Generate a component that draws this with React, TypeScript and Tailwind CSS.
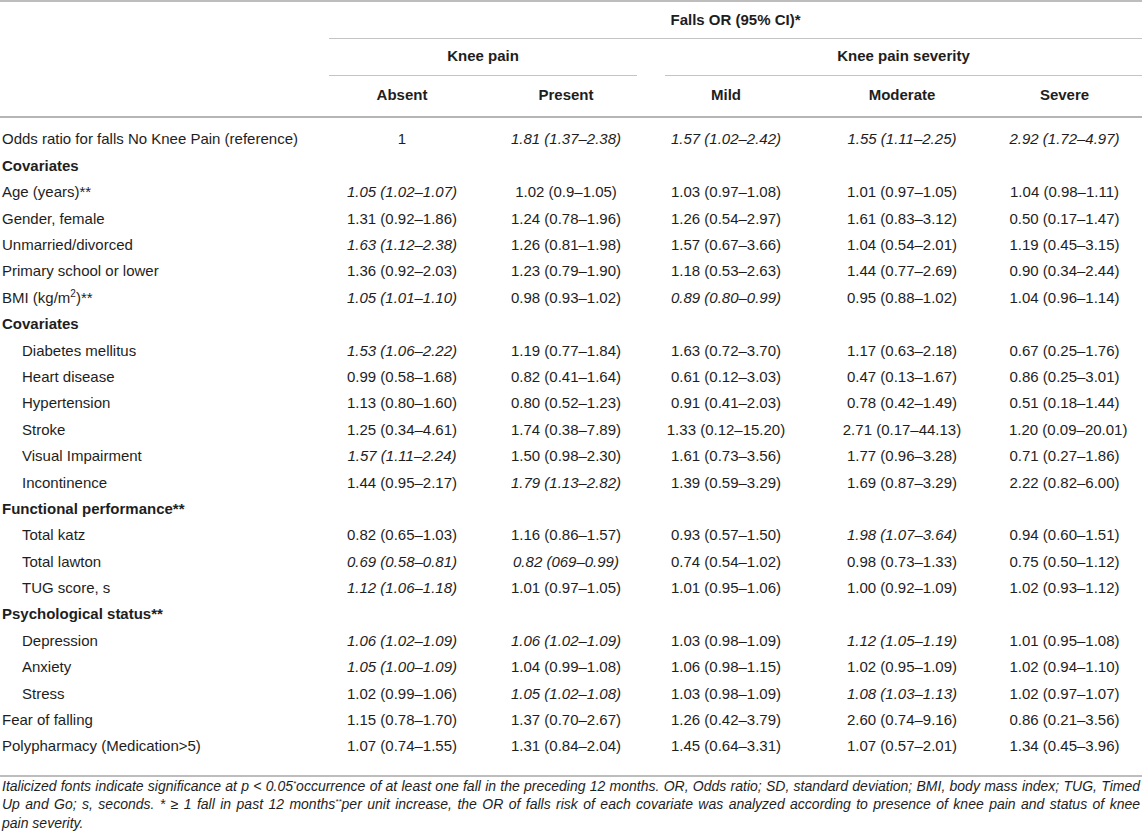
type Row = {
  label: string
  indent?: boolean
  section?: boolean
  cells?: string[]
}

// "i:" prefix marks an italicized (significant) value
const rows: Row[] = [
  { label: "Odds ratio for falls No Knee Pain (reference)", cells: ["1", "i:1.81 (1.37–2.38)", "i:1.57 (1.02–2.42)", "i:1.55 (1.11–2.25)", "i:2.92 (1.72–4.97)"] },
  { label: "Covariates", section: true },
  { label: "Age (years)**", cells: ["i:1.05 (1.02–1.07)", "1.02 (0.9–1.05)", "1.03 (0.97–1.08)", "1.01 (0.97–1.05)", "1.04 (0.98–1.11)"] },
  { label: "Gender, female", cells: ["1.31 (0.92–1.86)", "1.24 (0.78–1.96)", "1.26 (0.54–2.97)", "1.61 (0.83–3.12)", "0.50 (0.17–1.47)"] },
  { label: "Unmarried/divorced", cells: ["i:1.63 (1.12–2.38)", "1.26 (0.81–1.98)", "1.57 (0.67–3.66)", "1.04 (0.54–2.01)", "1.19 (0.45–3.15)"] },
  { label: "Primary school or lower", cells: ["1.36 (0.92–2.03)", "1.23 (0.79–1.90)", "1.18 (0.53–2.63)", "1.44 (0.77–2.69)", "0.90 (0.34–2.44)"] },
  { label: "BMI", cells: ["i:1.05 (1.01–1.10)", "0.98 (0.93–1.02)", "i:0.89 (0.80–0.99)", "0.95 (0.88–1.02)", "1.04 (0.96–1.14)"] },
  { label: "Covariates", section: true },
  { label: "Diabetes mellitus", indent: true, cells: ["i:1.53 (1.06–2.22)", "1.19 (0.77–1.84)", "1.63 (0.72–3.70)", "1.17 (0.63–2.18)", "0.67 (0.25–1.76)"] },
  { label: "Heart disease", indent: true, cells: ["0.99 (0.58–1.68)", "0.82 (0.41–1.64)", "0.61 (0.12–3.03)", "0.47 (0.13–1.67)", "0.86 (0.25–3.01)"] },
  { label: "Hypertension", indent: true, cells: ["1.13 (0.80–1.60)", "0.80 (0.52–1.23)", "0.91 (0.41–2.03)", "0.78 (0.42–1.49)", "0.51 (0.18–1.44)"] },
  { label: "Stroke", indent: true, cells: ["1.25 (0.34–4.61)", "1.74 (0.38–7.89)", "1.33 (0.12–15.20)", "2.71 (0.17–44.13)", "1.20 (0.09–20.01)"] },
  { label: "Visual Impairment", indent: true, cells: ["i:1.57 (1.11–2.24)", "1.50 (0.98–2.30)", "1.61 (0.73–3.56)", "1.77 (0.96–3.28)", "0.71 (0.27–1.86)"] },
  { label: "Incontinence", indent: true, cells: ["1.44 (0.95–2.17)", "i:1.79 (1.13–2.82)", "1.39 (0.59–3.29)", "1.69 (0.87–3.29)", "2.22 (0.82–6.00)"] },
  { label: "Functional performance**", section: true },
  { label: "Total katz", indent: true, cells: ["0.82 (0.65–1.03)", "1.16 (0.86–1.57)", "0.93 (0.57–1.50)", "i:1.98 (1.07–3.64)", "0.94 (0.60–1.51)"] },
  { label: "Total lawton", indent: true, cells: ["i:0.69 (0.58–0.81)", "i:0.82 (069–0.99)", "0.74 (0.54–1.02)", "0.98 (0.73–1.33)", "0.75 (0.50–1.12)"] },
  { label: "TUG score, s", indent: true, cells: ["i:1.12 (1.06–1.18)", "1.01 (0.97–1.05)", "1.01 (0.95–1.06)", "1.00 (0.92–1.09)", "1.02 (0.93–1.12)"] },
  { label: "Psychological status**", section: true },
  { label: "Depression", indent: true, cells: ["i:1.06 (1.02–1.09)", "i:1.06 (1.02–1.09)", "1.03 (0.98–1.09)", "i:1.12 (1.05–1.19)", "1.01 (0.95–1.08)"] },
  { label: "Anxiety", indent: true, cells: ["i:1.05 (1.00–1.09)", "1.04 (0.99–1.08)", "1.06 (0.98–1.15)", "1.02 (0.95–1.09)", "1.02 (0.94–1.10)"] },
  { label: "Stress", indent: true, cells: ["1.02 (0.99–1.06)", "i:1.05 (1.02–1.08)", "1.03 (0.98–1.09)", "i:1.08 (1.03–1.13)", "1.02 (0.97–1.07)"] },
  { label: "Fear of falling", cells: ["1.15 (0.78–1.70)", "1.37 (0.70–2.67)", "1.26 (0.42–3.79)", "2.60 (0.74–9.16)", "0.86 (0.21–3.56)"] },
  { label: "Polypharmacy (Medication>5)", cells: ["1.07 (0.74–1.55)", "1.31 (0.84–2.04)", "1.45 (0.64–3.31)", "1.07 (0.57–2.01)", "1.34 (0.45–3.96)"] },
]

const Label = ({ row }: { row: Row }) => {
  if (row.label === "BMI") {
    return (
      <>
        BMI (kg/m<span className="relative -top-[6px] text-[10px] leading-none">2</span>)**
      </>
    )
  }
  return <>{row.label}</>
}

export default function App() {
  return (
    <div className="w-[1142px] bg-white text-[#1e1e1e] font-['Liberation_Sans',Arial,sans-serif] text-[15px]">
      <table className="w-full table-fixed border-collapse">
        <colgroup>
          <col className="w-[329px]" />
          <col className="w-[146px]" />
          <col className="w-[182px]" />
          <col className="w-[138px]" />
          <col className="w-[214px]" />
          <col className="w-[133px]" />
        </colgroup>
        <thead className="font-bold">
          <tr className="border-t-[2px] border-[#bdbdbd]">
            <th />
            <th colSpan={5} className="h-[37px] p-0 text-center align-middle border-b border-[#c4c4c4]">
              Falls OR (95% CI)*
            </th>
          </tr>
          <tr>
            <th />
            <th colSpan={2} className="p-0 align-bottom">
              <div className="mr-[20px] h-[37px] flex items-center justify-center border-b border-[#c4c4c4]">
                Knee pain
              </div>
            </th>
            <th colSpan={3} className="p-0 align-bottom">
              <div className="ml-[8px] h-[37px] flex items-center justify-center border-b border-[#c4c4c4]">
                Knee pain severity
              </div>
            </th>
          </tr>
          <tr className="border-b-[2px] border-[#b5b5b5]">
            <th className="h-[41px]" />
            <th className="p-0 text-center">Absent</th>
            <th className="p-0 text-center">Present</th>
            <th className="p-0 text-center">Mild</th>
            <th className="p-0 text-center">Moderate</th>
            <th className="p-0 pr-[22px] text-center">Severe</th>
          </tr>
        </thead>
        <tbody>
          <tr>
            <td colSpan={6} className="h-[10px] p-0" />
          </tr>
          {rows.map((row, i) => (
            <tr key={i} className="h-[26.4px]">
              <td
                className={`p-0 whitespace-nowrap ${row.indent ? "pl-[22px]" : "pl-[2px]"} ${row.section ? "font-bold" : ""}`}
              >
                <Label row={row} />
              </td>
              {row.section
                ? [0, 1, 2, 3, 4].map((k) => <td key={k} className="p-0" />)
                : row.cells!.map((c, k) => {
                    const italic = c.startsWith("i:")
                    return (
                      <td
                        key={k}
                        className={`p-0 text-center whitespace-nowrap ${italic ? "italic" : ""} ${k === 4 ? "pr-[22px]" : ""}`}
                      >
                        {italic ? c.slice(2) : c}
                      </td>
                    )
                  })}
            </tr>
          ))}
          <tr className="border-b-[2px] border-[#bdbdbd]">
            <td colSpan={6} className="h-[16px] p-0" />
          </tr>
        </tbody>
      </table>
      <p className="pt-0 pl-[2px] pr-[2px] text-[14px] leading-[18.5px] italic text-justify">
        Italicized fonts indicate significance at p &lt; 0.05
        <span className="relative -top-[5px] text-[8px] leading-none">*</span>occurrence of at least one fall in the
        preceding 12 months. OR, Odds ratio; SD, standard deviation; BMI, body mass index; TUG, Timed Up and Go; s,
        seconds. * <span className="leading-none">≥</span> 1 fall in past 12 months
        <span className="relative -top-[5px] text-[8px] leading-none">**</span>per unit increase, the OR of falls risk of
        each covariate was analyzed according to presence of knee pain and status of knee pain{"\u00a0"}severity.
      </p>
    </div>
  )
}
